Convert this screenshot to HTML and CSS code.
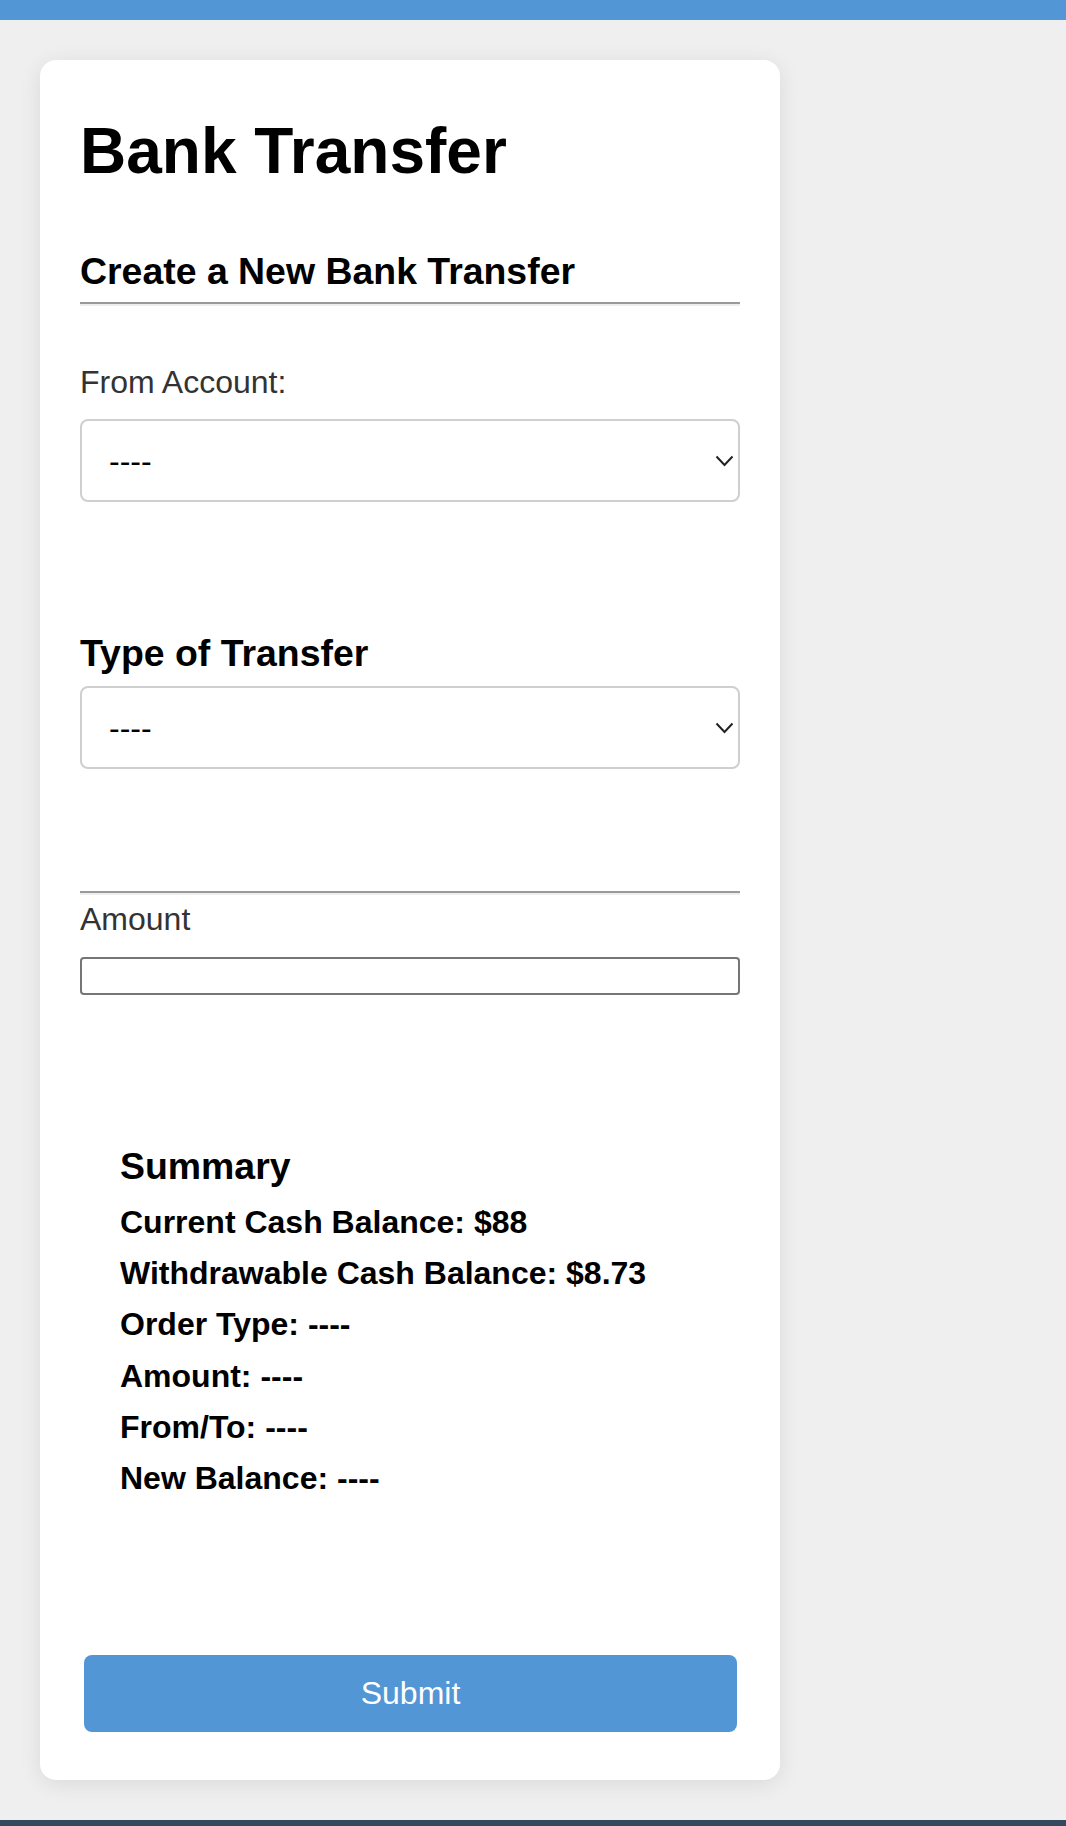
FILE: index.html
```html
<!DOCTYPE html>
<html lang="en">
<head>
    <meta charset="UTF-8">
    <meta name="viewport" content="width=device-width, initial-scale=1.0">
    <title>Bank Transfer</title>
    <link rel="stylesheet" href="styles.css">
</head>
<body>

    <div class="topbar"></div>

    <div class="page">
        <div class="card">
            <h1 class="title">Bank Transfer</h1>
            <h3 class="section-title">Create a New Bank Transfer</h3>
            <hr class="rule">

            <form class="transfer-form">
                <label class="field-label" for="from">From Account:</label>
                <div class="select-wrap">
                    <select id="from" class="field-select">
                        <option>----</option>
                    </select>
                    <svg class="chevron" width="19" height="12" viewBox="0 0 19 12">
                        <path d="M1.5 1.5 L9.5 10 L17.5 1.5" fill="none" stroke="#222" stroke-width="2"/>
                    </svg>
                </div>

                <h3 class="type-title">Type of Transfer</h3>
                <div class="select-wrap select-type">
                    <select class="field-select">
                        <option>----</option>
                    </select>
                    <svg class="chevron" width="19" height="12" viewBox="0 0 19 12">
                        <path d="M1.5 1.5 L9.5 10 L17.5 1.5" fill="none" stroke="#222" stroke-width="2"/>
                    </svg>
                </div>

                <hr class="rule rule-amount">
                <label class="field-label label-amount" for="amount">Amount</label>
                <input id="amount" class="field-input" type="text">

                <div class="summary">
                    <h3 class="summary-title">Summary</h3>
                    <div class="summary-lines">
                        <p>Current Cash Balance: $88</p>
                        <p>Withdrawable Cash Balance: $8.73</p>
                        <p>Order Type: ----</p>
                        <p>Amount: ----</p>
                        <p>From/To: ----</p>
                        <p>New Balance: ----</p>
                    </div>
                </div>

                <button type="button" class="submit-btn">Submit</button>
            </form>
        </div>
    </div>

    <div class="bottombar"></div>

</body>
</html>
```

FILE: styles.css
```css
*, *::after, *::before{
    margin: 0;
    padding: 0;
    box-sizing: border-box;
}
:root {
    --blue: #5396d5;
    --slate: #34495e;
    --bg: #efefef;
}

body{
    background-color: var(--bg);
    font-family: "Liberation Sans", Arial, sans-serif;
    color: #000;
}
.topbar{
    height: 20px;
    background-color: var(--blue);
}
.page{
    padding: 40px 40px 40px 40px;
}
.card{
    width: 740px;
    background-color: #fff;
    border-radius: 16px;
    padding: 40px 40px 40px 40px;
    box-shadow: 0 4px 22px rgba(0,0,0,0.09);
}

.title{
    font-size: 64px;
    line-height: 74px;
    font-weight: bold;
    margin-top: 14px;
}
.section-title, .type-title, .summary-title{
    font-size: 37.44px;
    line-height: 43px;
    font-weight: bold;
}
.section-title{
    margin-top: 62px;
}
.rule{
    height: 0;
    border: none;
    border-top: 2px solid #9a9a9a;
    border-bottom: 2px solid #eeeeee;
    margin-top: 9px;
}

.transfer-form{
    display: flex;
    flex-direction: column;
}
.field-label{
    font-size: 32px;
    line-height: 37px;
    color: #333;
    margin-top: 58px;
}
.select-wrap{
    position: relative;
    margin-top: 18px;
    height: 83px;
}
.field-select{
    appearance: none;
    -webkit-appearance: none;
    width: 100%;
    height: 83px;
    border: 2px solid #cfcfcf;
    border-radius: 8px;
    background-color: #fff;
    padding: 0 50px 0 27px;
    font-family: "Liberation Sans", Arial, sans-serif;
    font-size: 32px;
    color: #000;
    outline: none;
}
.chevron{
    position: absolute;
    right: 6px;
    top: 36px;
    pointer-events: none;
}
.type-title{
    margin-top: 130px;
}
.select-type{
    margin-top: 11px;
}
.rule-amount{
    margin-top: 122px;
}
.label-amount{
    margin-top: 6px;
}
.field-input{
    margin-top: 19px;
    height: 38px;
    width: 100%;
    border: 2px solid #767676;
    border-radius: 4px;
    font-family: "Liberation Sans", Arial, sans-serif;
    font-size: 26px;
    padding: 0 6px;
    outline: none;
}

.summary{
    padding-left: 40px;
}
.summary-title{
    margin-top: 150px;
}
.summary-lines{
    margin-top: 9px;
}
.summary-lines p{
    font-size: 32px;
    line-height: 51.2px;
    font-weight: bold;
}

.submit-btn{
    margin: 151px 3px 8px 4px;
    height: 77px;
    border: none;
    border-radius: 8px;
    background-color: var(--blue);
    color: #fff;
    font-family: "Liberation Sans", Arial, sans-serif;
    font-size: 32px;
    cursor: pointer;
}

.bottombar{
    height: 40px;
    background-color: var(--slate);
}
```
